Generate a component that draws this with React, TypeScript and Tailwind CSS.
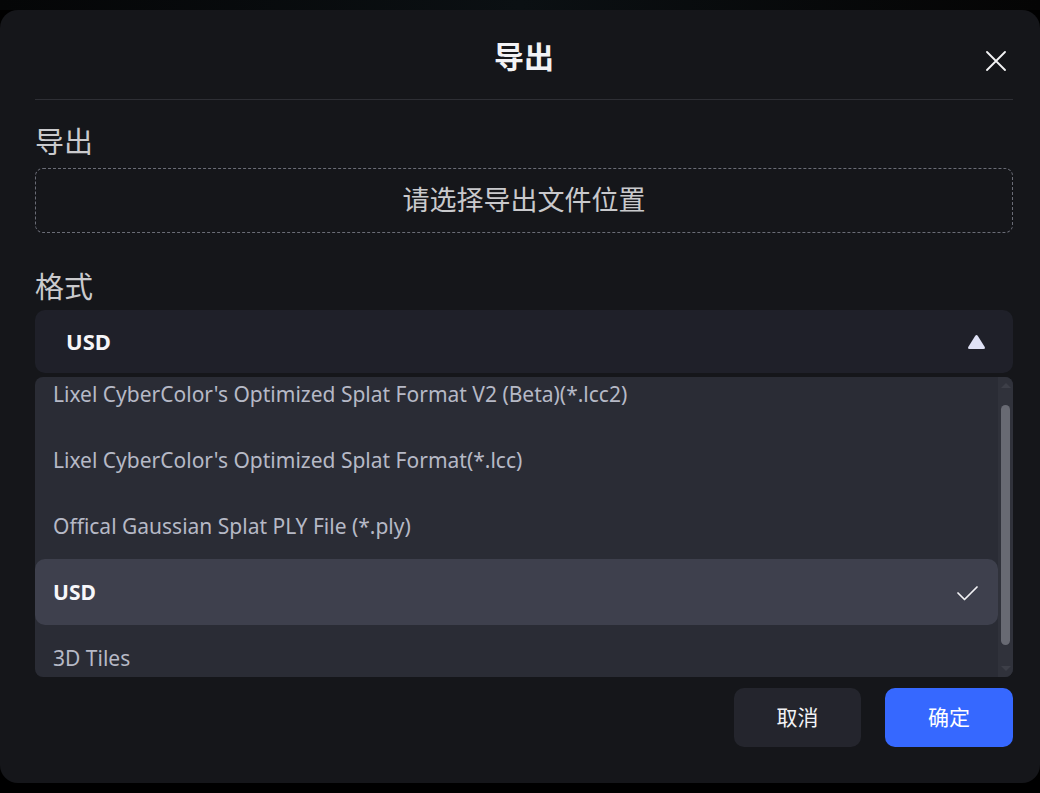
import React from "react";

const FONT = {
  fontFamily: '"Noto Sans", "Noto Sans CJK SC", sans-serif',
};

const items = [
  "Lixel CyberColor's Optimized Splat Format V2 (Beta)(*.lcc2)",
  "Lixel CyberColor's Optimized Splat Format(*.lcc)",
  "Offical Gaussian Splat PLY File (*.ply)",
  "USD",
  "3D Tiles",
];

export default function App() {
  return (
    <div className="w-[1040px] h-[793px] bg-black overflow-hidden flex flex-col" style={FONT}>
      <div className="h-[10px] bg-gradient-to-r from-[#050607] via-[#0b1013] to-[#050505]" />
      <div className="w-[1040px] h-[773px] bg-[#15161a] rounded-[18px] flex flex-col pl-[35px] pr-[27px]">
        {/* header */}
        <div className="relative h-[89px] flex items-center justify-center pt-[4px]">
          <span className="text-[30px] font-bold text-[#f2f2f5] leading-none">导出</span>
          <button className="absolute right-[6px] top-[40px] w-[22px] h-[22px] flex items-center justify-center">
            <svg width="20" height="20" viewBox="0 0 20 20" fill="none">
              <path d="M1 1 L19 19 M19 1 L1 19" stroke="#f4f4f6" strokeWidth="1.8" strokeLinecap="round" />
            </svg>
          </button>
        </div>
        <div className="h-px bg-[#2e2f35]" />

        <div className="mt-[21px] h-[40px] flex items-center text-[29px] text-[#cacacd] leading-none">导出</div>
        <div className="mt-[7px] h-[65px] rounded-[8px] border border-dashed border-[#6a6c76] flex items-center justify-center text-[27px] text-[#c9c9cc]">
          请选择导出文件位置
        </div>

        <div className="mt-[33px] h-[40px] flex items-center text-[29px] text-[#cacacd] leading-none">格式</div>
        <div className="mt-[4px] h-[63px] rounded-[10px] bg-[#1f2029] flex items-center justify-between pl-[31px] pr-[27px]">
          <span className="text-[22px] font-bold text-[#f5f5f8]">USD</span>
          <svg width="19" height="16" viewBox="0 0 19 16">
            <path d="M8 2.2 Q9.5 0 11 2.2 L17.6 12.8 Q18.8 15 16.4 15 L2.6 15 Q0.2 15 1.4 12.8 Z" fill="#dfe1f5" />
          </svg>
        </div>

        {/* dropdown list */}
        <div className="mt-[4px] h-[300px] rounded-[8px] bg-[#2a2c35] flex overflow-hidden">
          <div className="flex-1 flex flex-col overflow-hidden">
            <div className="-mt-[16px] flex flex-col">
              {items.map((it) => {
                const sel = it === "USD";
                return (
                  <div
                    key={it}
                    className={
                      "h-[66px] shrink-0 flex items-center justify-between pl-[18px] pr-[20px] pt-[2px] rounded-[10px] " +
                      (sel ? "bg-[#3e404d]" : "")
                    }
                  >
                    <span
                      className={
                        sel
                          ? "text-[21px] font-bold text-[#f7f7fa]"
                          : "text-[21px] text-[#b6b9c6]"
                      }
                    >
                      {it}
                    </span>
                    {sel && (
                      <svg width="21" height="15" viewBox="0 0 21 15" fill="none">
                        <path d="M1 7 L7.5 13.5 L20 1" stroke="#f2f2f5" strokeWidth="1.7" strokeLinecap="round" strokeLinejoin="round" />
                      </svg>
                    )}
                  </div>
                );
              })}
            </div>
          </div>
          {/* scrollbar */}
          <div className="w-[15px] bg-[#30323b] flex flex-col items-center justify-between py-[6px]">
            <div className="w-0 h-0 border-l-[5px] border-r-[5px] border-b-[5px] border-l-transparent border-r-transparent border-b-[#3d3f48]" />
            <div className="w-[9px] h-[240px] rounded-full bg-[#686a73] -mt-[4px]" />
            <div className="w-0 h-0 border-l-[5px] border-r-[5px] border-t-[5px] border-l-transparent border-r-transparent border-t-[#3d3f48]" />
          </div>
        </div>

        {/* buttons */}
        <div className="mt-[11px] flex justify-end gap-[24px]">
          <button className="w-[127px] h-[59px] rounded-[10px] bg-[#24252d] text-[21px] text-[#f2f2f5]">取消</button>
          <button className="w-[128px] h-[59px] rounded-[10px] bg-[#3668ff] text-[21px] text-white">确定</button>
        </div>
      </div>
    </div>
  );
}
